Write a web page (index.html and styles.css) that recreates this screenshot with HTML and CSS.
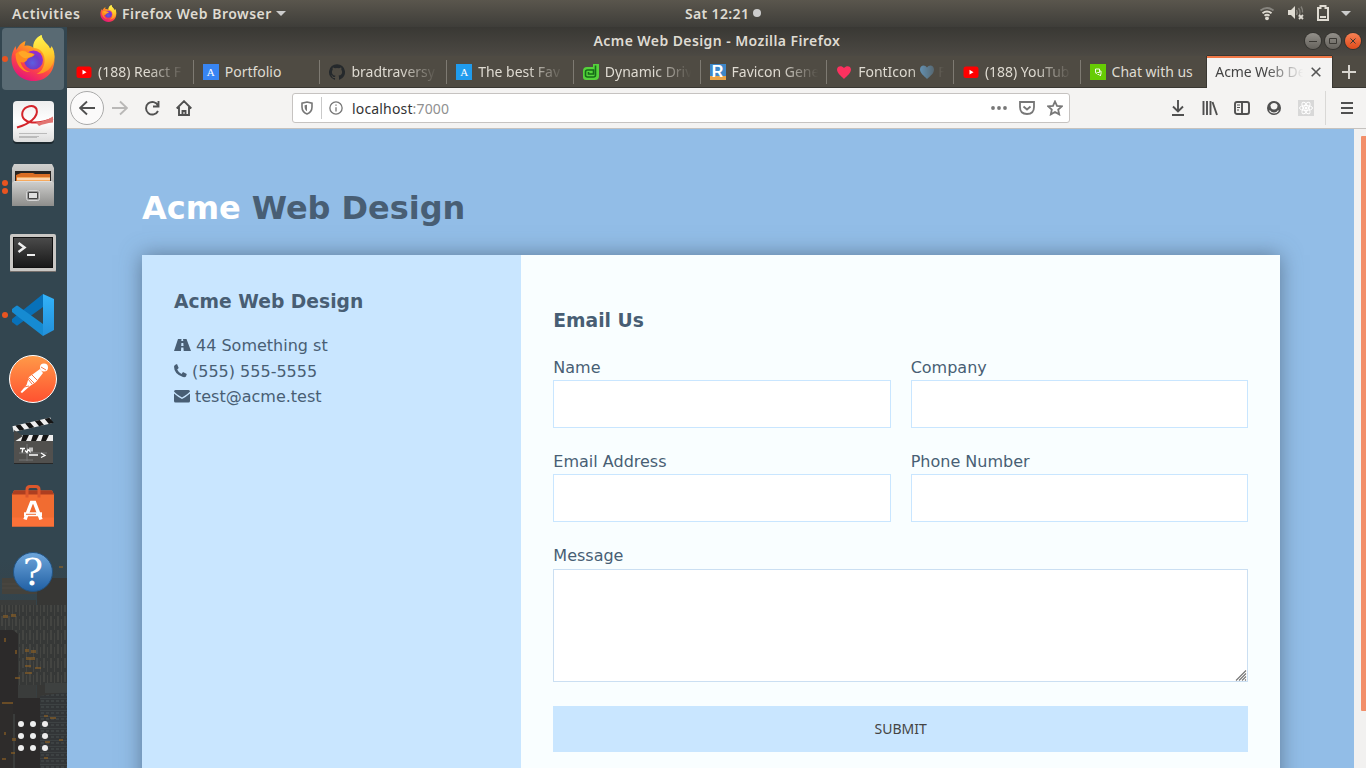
FILE: index.html
```html
<!DOCTYPE html>
<html lang="en">
<head>
<meta charset="utf-8">
<title>Acme Web Design</title>
<link rel="stylesheet" href="styles.css">
</head>
<body>
<svg class="defs" width="0" height="0">
  <defs>
    <linearGradient id="ffBody" x1=".8" y1="0" x2=".3" y2="1"><stop offset="0" stop-color="#fff04a"/><stop offset=".35" stop-color="#ff9a22"/><stop offset=".65" stop-color="#ff4a43"/><stop offset="1" stop-color="#e3127d"/></linearGradient>
    <linearGradient id="ffFlame" x1=".5" y1="0" x2=".6" y2="1"><stop offset="0" stop-color="#fff44f"/><stop offset=".5" stop-color="#ffcf2e"/><stop offset="1" stop-color="#ff8a1e"/></linearGradient>
    <radialGradient id="ffGlobe" cx=".45" cy=".65" r=".6"><stop offset="0" stop-color="#5b5fe0"/><stop offset=".6" stop-color="#6e3cc8"/><stop offset="1" stop-color="#9a2ad0"/></radialGradient>
    <symbol id="firefox" viewBox="0 0 46 46">
      <path d="M1 24C1 18 4 13 5 11l1 4c2-4 4-7 9-9l-1 5c4-1 7 0 9 2 0-6 3-11 8-13 1 7 6 9 8 14l2-2c7 13 2 34-18 34C10 46 1 36 1 24z" fill="url(#ffBody)"/>
      <path d="M31 0c-6 3-9 8-8 13 7 0 12 6 11 14-1 7-4 10-8 12 9 0 17-6 18-17 0-5-1-8-3-11l-1 4C39 9 32 7 31 0z" fill="url(#ffFlame)"/>
      <circle cx="23" cy="25" r="9.5" fill="url(#ffGlobe)"/>
      <path d="M5 19c3-4 9-5 12-2l7 2c0 3-5 3-7 5-1 3-4 4-7 3 1 5 5 9 10 10C12 38 5 30 5 19z" fill="#ff8b1e"/>
      <path d="M8 18c3-3 7-2 9 0l6 1c-1 3-5 3-7 4-3 1-6-2-8-5z" fill="#ffa726"/>
    </symbol>
    <symbol id="youtube" viewBox="0 0 16 16"><rect x=".5" y="2.500" width="15" height="11.500" rx="2.500" fill="#f00"/><path d="M6.500 5.800l4 2.400-4 2.400z" fill="#fff"/></symbol>
    <linearGradient id="paper" x1="0" y1="0" x2="0" y2="1"><stop offset="0" stop-color="#eee"/><stop offset=".5" stop-color="#fff"/><stop offset="1" stop-color="#ddd"/></linearGradient>
    <linearGradient id="metal" x1="0" y1="0" x2="0" y2="1"><stop offset="0" stop-color="#d0d0ce"/><stop offset="1" stop-color="#8d8d8b"/></linearGradient>
    <linearGradient id="screen" x1="0" y1="0" x2="0" y2="1"><stop offset="0" stop-color="#4a4a4a"/><stop offset="1" stop-color="#191919"/></linearGradient>
    <linearGradient id="orange" x1="0" y1="0" x2="0" y2="1"><stop offset="0" stop-color="#ff9a48"/><stop offset="1" stop-color="#ff5130"/></linearGradient>
    <linearGradient id="blue" x1="0" y1="0" x2="0" y2="1"><stop offset="0" stop-color="#6ea6db"/><stop offset="1" stop-color="#205fa3"/></linearGradient>
    <linearGradient id="codeLight" x1="0" y1="0" x2="0" y2="1"><stop offset="0" stop-color="#33b3fa"/><stop offset="1" stop-color="#2290da"/></linearGradient>
    <linearGradient id="dusk" x1="0" y1="0" x2="0" y2="1"><stop offset="0" stop-color="#334650"/><stop offset="1" stop-color="#3a3a37"/></linearGradient>
    <pattern id="slats" width="7" height="14" patternUnits="userSpaceOnUse"><rect width="7" height="14" fill="#363837"/><path d="M1 0h2v10H1zM5 3h1v11H5z" fill="#444542"/></pattern>
    <pattern id="floors" width="5" height="6" patternUnits="userSpaceOnUse"><rect width="5" height="6" fill="#323537"/><path d="M0 0h5v1H0zM1 2h3v2H1z" fill="#3d4243"/></pattern>
  </defs>
</svg>
<div class="desktop">
  <header class="topbar">
    <div class="top-left"><span class="activities">Activities</span>
      <svg width="17" height="17"><use href="#firefox"/></svg><span class="app-name">Firefox Web Browser</span>
      <svg width="10" height="5"><path d="M0 0h10L5 5z" fill="#ccc"/></svg></div>
    <div class="clock"><span>Sat 12:21</span><i class="dot"></i></div>
    <div class="top-right">
      <svg width="16" height="16" fill="none" stroke-width="2"><path d="M1.500 5.500q6.500-5 13 0" stroke="#86847e"/><path d="M3.500 8.200q4.500-3.400 9 0M5.500 10.700q2.500-2 5 0" stroke="#dfdbd2"/><circle cx="8" cy="13.300" r="1.900" fill="#dfdbd2"/></svg>
      <svg width="18" height="16"><path d="M1 5h3l4-4v13l-4-4H1z" fill="#dfdbd2"/><path d="M9.500 5q1.500 2.500 0 5M11.500 3q3 4.500 0 9M14 1.500q2 3 1.500 6" stroke="#817e77" stroke-width="1.400" fill="none"/><path d="M12 10l4 4m0-4l-4 4" stroke="#dfdbd2" stroke-width="1.800"/></svg>
      <svg width="14" height="18"><path d="M2 4h2.500V2h5v2H12v12H2z" fill="none" stroke="#dfdbd2" stroke-width="2"/><path d="M4 12h6v2H4z" fill="#dfdbd2"/></svg>
      <svg width="10" height="5"><path d="M0 0h10L5 5z" fill="#ccc"/></svg>
    </div>
  </header>
  <nav class="dock">
    <svg class="skyline" width="67" height="208" viewBox="0 0 67 208">
      <path d="M0 0h67v208H0z" fill="url(#dusk)"/><path d="M0 40h36v168H0z" fill="#3a3c3b"/><path d="M37 18h30v190H37z" fill="#373735"/>
      <path d="M2 18h35v16H2z" fill="#44423c"/><path d="M2 24h35M2 28h35" stroke="#4c4942"/>
      <path d="M0 45h67v80H0z" fill="url(#slats)"/><path d="M0 70h13l5 4v80H0zM15 138h25v70H15z" fill="#2c2a2a"/>
      <path d="M0 142h13v66H0z" fill="#2e2c2b"/><path d="M40 136l27-4v76H40z" fill="url(#floors)"/>
      <path d="M45 123h22v10H45z" fill="#3e4140"/>
      <path d="M3 55h5v3H3zM11 54h5v3h-5zM15 90h2v4h-2zM4 78h2v4H4zM25 89h4v3h-4zM31 90h5v3h-5zM26 97h9v3h-9zM25 105h6v2h-6zM35 107h6v2h-6zM25 112h7v2h-7zM15 117h5v2h-5zM2 142h11v2H2zM44 155h4v2h-4zM50 157h6v2h-6zM12 178h4v3h-4zM4 172h2v3H4zM11 192h4v2h-4zM45 181h5v2h-5zM59 179h4v2h-4zM2 198h4v2H2zM44 197h4v2h-4zM59 6h4v2h-4z" fill="#916323" opacity=".6"/>
    </svg>
    <div class="dock-item active"><i class="run"></i><svg class="app" viewBox="0 0 67 64"><use href="#firefox" x="10.500" y="8" width="46" height="46"/></svg></div>
    <div class="dock-item"><svg class="app" viewBox="0 0 67 64"><rect x="13" y="11" width="41" height="42" rx="4" fill="#1d292f"/><rect x="13" y="10" width="41" height="41" rx="4" fill="url(#paper)"/><path d="M17 36.500C29 33 39 26 36.500 18c-2.500-5.500-12-3-14 3-1.500 6 3 10 9.500 10.500 7 .5 14-1 21-4" fill="none" stroke="#d4252c" stroke-width="2"/><path d="M36 31.500q9-1 17-6v6q-9 1-14 3.500z" fill="#e27572"/><path d="M19 42.500h28M19 45.500h20M19 46.500h18" stroke="#bbb"/></svg></div>
    <div class="dock-item"><i class="run two"></i><svg class="app" viewBox="0 -2 67 64"><path d="M12 11l2-4h38l2 4v36H12z" fill="url(#metal)"/><path d="M15 14h36v12H15z" fill="#272422"/><path d="M16 18l5-2h12l2 1h15v8H16z" fill="#d96d24"/><path d="M17 20h33v5H17z" fill="#f6a95c"/><path d="M17 21.500h33v1H17z" fill="#fff"/><path d="M14 24h38l2 2v23H12V26z" fill="url(#metal)"/><path d="M14 24.500h38" stroke="#ddd"/><rect x="26" y="33" width="14" height="11" rx="2" fill="#999"/><rect x="26.500" y="33.500" width="13" height="10" rx="2" fill="none" stroke="#d6d6d6"/><path d="M28.500 35.500h9v6h-9z" fill="#e0e0e0" stroke="#444"/></svg></div>
    <div class="dock-item"><svg class="app" viewBox="0 0 67 64"><rect x="10" y="15" width="46" height="38" rx="2" fill="#c9c7c4"/><path d="M10 52.500h46" stroke="#756f6c"/><path d="M13 18h40v31H13z" fill="#111"/><path d="M14 19h38v29H14z" fill="url(#screen)"/><path d="M18.500 24l6 4.500-6 4.500" fill="none" stroke="#eee" stroke-width="2.500"/><path d="M27 36h8" stroke="#eee" stroke-width="2"/></svg></div>
    <div class="dock-item"><i class="run"></i><svg class="app" viewBox="0 0 67 64"><path d="M43 11v13L18 42q-1 1-2 0l-4-3v-3z" fill="#0871b9"/><path d="M12 26l4-3q1-1 2 0l25 18v12L12 29z" fill="#168bd2"/><path d="M43 11l11 5v31l-11 6V28z" fill="url(#codeLight)"/></svg></div>
    <div class="dock-item"><svg class="app" viewBox="0 0 67 64"><circle cx="33" cy="32" r="23.500" fill="url(#orange)" stroke="#fff"/><circle cx="44" cy="20.500" r="4" fill="#fff"/><path d="M40 22l3 4-7 9-6 4-8 7-1.500-1 6-7 2.500-8z" fill="#fff"/><path d="M29 31l5 5m-2-8l5 5m-9-1l4 5M41 20l5 3M24 40l5-1" stroke="#f77a4b"/></svg></div>
    <div class="dock-item"><svg class="app" viewBox="0 -2 67 64"><path d="M14 27h39v24H14z" fill="#51504e"/><path d="M14 50.500h39" stroke="#282828"/><path d="M14 22h39v6H14z" fill="#eee"/><path d="M23 22h6l-3 6h-5zM33 22h6l-3 6h-5zM43 22h6l-3 6h-5z" fill="#151515"/><g transform="rotate(-13 14 20)"><path d="M14 13h39v6H14z" fill="#eee"/><path d="M22 13h-5l3 6h5zM32 13h-5l3 6h5zM42 13h-5l3 6h5zM52 13h-5l3 6h5z" fill="#151515"/></g><path d="M14 17l9 6-9 6z" fill="#454645"/><path d="M19 40h28M19 47h14M27 31v17" stroke="#777"/><path d="M20 35.500h5m-2 0l-1 4m3-2l2 2 1-3 2 2v-4m2 0v4M29 42h9m3-2l4 2.500-4 2" stroke="#fff" stroke-width="1.300" fill="none"/></svg></div>
    <div class="dock-item"><svg class="app" viewBox="0 -1.500 67 64"><path d="M12 18l2-4h38l2 4v32H12z" fill="#f16c31"/><path d="M12 18l2-4h38l2 4z" fill="#ad3e20"/><path d="M12 41h42v9H12z" fill="#fb7138"/><path d="M27 21v-8q0-3 3-3h6q3 0 3 3v8" fill="none" stroke="#dc572c" stroke-width="3"/><path d="M25 43l6.500-17h3L41 43" fill="none" stroke="#fff" stroke-width="3.500"/><path d="M24 37.800h18" stroke="#fff" stroke-width="4"/><path d="M26 37.800h10" stroke="#ed6c34"/></svg></div>
    <div class="dock-item"><svg class="app" viewBox="0 -1 67 64"><circle cx="33" cy="32" r="19.500" fill="url(#blue)" stroke="#235482"/><text x="33" y="45" class="question">?</text></svg></div>
    <svg class="apps-grid" viewBox="0 0 32 32" fill="#eee"><circle cx="4" cy="4" r="3"/><circle cx="16" cy="4" r="3"/><circle cx="28" cy="4" r="3"/><circle cx="4" cy="16" r="3"/><circle cx="16" cy="16" r="3"/><circle cx="28" cy="16" r="3"/><circle cx="4" cy="28" r="3"/><circle cx="16" cy="28" r="3"/><circle cx="28" cy="28" r="3"/></svg>
  </nav>
  <main class="window">
    <div class="titlebar"><span class="window-title">Acme Web Design - Mozilla Firefox</span>
      <div class="controls"><i class="ctl"><svg viewBox="0 0 16 16"><path d="M4 8.500h8"/></svg></i><i class="ctl"><svg viewBox="0 0 16 16"><path d="M4.500 5.500h7v5h-7z"/></svg></i><i class="ctl close"><svg viewBox="0 0 16 16"><path d="M5.500 5.500l5 5m0-5l-5 5"/></svg></i></div></div>
    <div class="tabs">
      <div class="tab first"><svg class="fav"><use href="#youtube"/></svg><span class="label fade">(188) React F</span></div>
      <div class="tab"><span class="fav letter">A</span><span class="label">Portfolio</span></div>
      <div class="tab"><svg class="fav" viewBox="0 0 16 16"><path d="M8 .2a8 8 0 0 0-2.530 15.590c.4.070.550-.170.550-.380v-1.490c-2.230.480-2.700-.950-2.700-.950-.360-.920-.890-1.170-.890-1.170-.730-.500.060-.490.060-.490.800.060 1.230.830 1.230.830.710 1.220 1.870.870 2.330.660.070-.520.280-.870.510-1.070-1.780-.200-3.640-.890-3.640-3.950 0-.870.310-1.590.820-2.150-.080-.200-.360-1.020.080-2.120 0 0 .670-.210 2.200.820a7.600 7.600 0 0 1 4 0c1.530-1.040 2.200-.820 2.200-.820.440 1.100.160 1.920.080 2.120.510.560.820 1.270.820 2.150 0 3.070-1.870 3.750-3.650 3.950.290.250.540.730.540 1.480v2.200c0 .210.150.460.550.380A8 8 0 0 0 8 .2z" fill="#25292c"/></svg><span class="label fade">bradtraversy</span></div>
      <div class="tab"><span class="fav letter sky">A</span><span class="label fade">The best Fav</span></div>
      <div class="tab"><svg class="fav" viewBox="0 0 16 16"><path d="M10 0h6v12q0 4-4 4H3q-3 0-3-3V7q0-4 4-4h6z" fill="#55d33b"/><path d="M12.500 1.500V11q0 2-2 2h-6q-2 0-2-2V8q0-2 2-2h6v4h-5V8" fill="none" stroke="#156b19" stroke-width="1.600"/></svg><span class="label fade">Dynamic Driv</span></div>
      <div class="tab"><span class="fav letter rr">R</span><span class="label fade">Favicon Gene</span></div>
      <div class="tab"><svg class="fav" viewBox="0 0 16 16"><path d="M8 15C5 12 1 9 1 5.500 1 2 5.500 1 8 4c2.500-3 7-2 7 1.500S11 12 8 15z" fill="#fc315f"/></svg><span class="label fade">FontIcon <svg class="blue-heart" viewBox="0 0 16 16"><path d="M8 15C5 12 1 9 1 5.500 1 1 6 0 8 3.500 10 0 15 1 15 5.500S11 12 8 15z" fill="#6db4ea"/></svg> F</span></div>
      <div class="tab"><svg class="fav"><use href="#youtube"/></svg><span class="label fade">(188) YouTub</span></div>
      <div class="tab"><svg class="fav" viewBox="0 0 16 16"><path d="M0 0h16v16H0z" fill="#66cc04"/><path d="M5.500 5h4v3.500h-2L6 9.500v-1h-.5zM10 7h1v3.500h-.5V12L9 10.500H7.500" fill="none" stroke="#fff" stroke-width=".9"/></svg><span class="label">Chat with us</span></div>
      <div class="tab current"><span class="label fade">Acme Web De</span><svg class="x" viewBox="0 0 10 10"><path d="M.7.700l8.600 8.600m0-8.600L.7 9.300"/></svg></div>
      <div class="new-tab"><svg width="14" height="14"><path d="M7 0v14M0 7h14" stroke="#d8d5cf" stroke-width="2"/></svg></div>
    </div>
    <div class="toolbar">
      <button class="back"><svg class="ico" viewBox="0 0 16 16"><path d="M16 8H1m7-6.500L1 8l7 6.500"/></svg></button>
      <svg class="ico forward" viewBox="0 0 16 16"><path d="M0 8h15M8 1.500L15 8l-7 6.500"/></svg>
      <svg class="ico reload" viewBox="0 0 16 16"><path d="M14 5.500A6.300 6.300 0 1 0 14 11M14.500 1v5.500H9"/></svg>
      <svg class="ico home" viewBox="0 0 16 16"><path d="M.7 8.500L8 1.200l7.300 7.300M3 7v8h10V7M6.500 15v-4h3v4"/></svg>
      <div class="urlbar">
        <svg class="ico small shield" viewBox="0 0 16 16"><path d="M8 2l5 1.200V7c0 3.500-1.700 5.700-5 7-3.300-1.300-5-3.500-5-7V3.200z"/><path d="M8 4.800v6.500C6.500 10.300 5.600 8.700 5.600 7V5.300z" fill="#777" stroke="none"/></svg>
        <i class="url-sep"></i>
        <svg class="ico info" viewBox="0 0 16 16"><circle cx="8" cy="8" r="7"/><path d="M8 7v5M8 4v1.500"/></svg>
        <span class="url">localhost<em>:7000</em></span>
        <svg class="ico dots" viewBox="0 0 16 16"><g fill="#777" stroke="none"><circle cx="2" cy="8" r="1.900"/><circle cx="8" cy="8" r="1.900"/><circle cx="14" cy="8" r="1.900"/></g></svg>
        <svg class="ico pocket" viewBox="0 0 16 16"><path d="M1 2h14v5q0 7-7 7T1 7zM4.500 6.500L8 9.500l3.500-3"/></svg>
        <svg class="ico star" viewBox="0 0 16 16"><path d="M8 1.500l2 4.400 4.800.500-3.600 3.200 1 4.800L8 12l-4.200 2.400 1-4.800L1.200 6.400 6 5.900z"/></svg>
      </div>
      <div class="tools">
        <svg class="ico" viewBox="0 0 16 16"><path d="M8 0v11M3 6.500l5 5 5-5M2 15h12"/></svg>
        <svg class="ico" viewBox="0 0 16 16"><path d="M1.500 1v14M5 1v14M8.500 1v14M10.500 2L15 15"/></svg>
        <svg class="ico" viewBox="0 0 16 16"><rect x="1" y="2" width="14" height="12" rx="2"/><path d="M8 2v12"/><path d="M3 5h3M3 7.500h3M3 10h2" stroke-width="1"/></svg>
        <svg class="ico" viewBox="0 0 16 16"><circle cx="8" cy="8" r="7" fill="#505050" stroke="none"/><path d="M4.500 5.500Q5 3 8 3t3.500 2.500Q11.500 9.500 8 9.500T4.500 5.500z" fill="#f4f3f2" stroke="none"/><path d="M3.500 10.500q1.500 2.500 4.500 2.500t4.500-2.500" stroke="#f4f3f2" stroke-width="1.200"/></svg>
        <svg class="ico" viewBox="0 0 16 16"><path d="M0 0h16v16H0z" fill="#d8d8d8" stroke="none"/><g stroke="#fff" stroke-width="1"><ellipse cx="8" cy="8" rx="6.500" ry="2.500"/><ellipse cx="8" cy="8" rx="6.500" ry="2.500" transform="rotate(60 8 8)"/><ellipse cx="8" cy="8" rx="6.500" ry="2.500" transform="rotate(-60 8 8)"/></g><circle cx="8" cy="8" r="1.500" fill="#fff" stroke="none"/></svg>
        <i class="tool-sep"></i>
        <svg class="ico menu" viewBox="0 0 16 16"><path d="M2 3h12M2 8h12M2 13h12"/></svg>
      </div>
    </div>
    <div class="viewport">
      <div class="page">
        <h1><span>Acme</span> Web Design</h1>
        <div class="wrapper">
          <section class="company"><h3>Acme Web Design</h3>
            <ul>
              <li><svg width="17" height="16" viewBox="0 0 17 16"><path fill-rule="evenodd" d="M4 2h3.500l-.2 2h2L9 2h3.500L17 14H9.700l-.3-3.500H7.200L7 14H0zM7.400 6l-.2 3h2.300l-.2-3z" fill="#485e74"/></svg><span>44 Something st</span></li>
              <li><svg width="13" height="16" viewBox="0 0 13 16"><path d="M3 1l1.700 4L3.200 6.500q1.300 3 4.300 4.500L9 9l3.800 2-.8 2.500q-1 1-3 .5Q0 11 0 3.500q.3-2 3-2.500z" fill="#485e74"/></svg><span>(555) 555-5555</span></li>
              <li><svg width="16" height="16" viewBox="0 0 16 16"><path d="M1.500 2h13Q16 2 16 3.500 14 6 8 9.500 2 6 0 3.500 0 2 1.500 2zM0 5.500Q4 9 8 11q4-2 8-5.500v7.500q0 1.500-1.500 1.500h-13Q0 14.500 0 13z" fill="#485e74"/></svg><span>test@acme.test</span></li>
            </ul></section>
          <section class="contact"><h3>Email Us</h3>
            <form>
              <p><label>Name</label><input></p>
              <p><label>Company</label><input></p>
              <p><label>Email Address</label><input></p>
              <p><label>Phone Number</label><input></p>
              <p class="full message"><label>Message</label><textarea></textarea><svg class="grip" width="12" height="12"><path d="M1 11.500L11 1.500M4 11.500l7-7M7 11.500l4-4M10 11.500l1-1" stroke="#777" stroke-width="1.100"/></svg></p>
              <button class="full submit" type="button">SUBMIT</button>
            </form></section>
        </div>
      </div>
      <div class="scrollbar"><i></i></div>
    </div>
  </main>
</div>
</body>
</html>
```
FILE: styles.css
```css
* { box-sizing: border-box; }
body { margin: 0; width: 1366px; height: 768px; overflow: hidden; font-family: "Noto Sans", "Open Sans", sans-serif; }
svg { display: block; flex: none; }
i, em { font-style: normal; }
.defs { position: absolute; }
.desktop { display: grid; grid-template: 27px 741px / 67px 1299px; }

.topbar { grid-column: 1 / 3; display: grid; grid-template-columns: minmax(0, 1fr) auto minmax(0, 1fr); align-items: center; padding-bottom: 1px; background: linear-gradient(#5a564d, #3e3d39); color: #dfdbd2; font-size: 14px; font-weight: 600; white-space: nowrap; }
.top-left { display: flex; align-items: center; padding-left: 12px; }
.activities { width: 88px; letter-spacing: .6px; }
.app-name { margin: 0 4px 0 5px; width: 150px; letter-spacing: .5px; }
.clock { display: flex; align-items: center; gap: 4px; width: 77px; letter-spacing: .35px; margin-left: 81px; }
.dot { width: 8px; height: 8px; border-radius: 50%; background: #ccc; }
.top-right { display: flex; align-items: center; justify-content: flex-end; gap: 11px; padding-right: 15px; }
.top-right svg:first-child { margin-right: 1px; }

.dock { position: relative; display: flex; flex-direction: column; background: #334650; }
.skyline { position: absolute; left: 0; bottom: 0; }
.dock-item { position: relative; height: 64px; }
.dock-item.active::before { content: ""; position: absolute; left: 2px; top: 1px; width: 62px; height: 62px; border-radius: 4px; background: #596a73; }
.app { position: relative; width: 67px; height: 64px; }
.run { position: absolute; z-index: 1; left: 2px; top: 29px; width: 6px; height: 6px; border-radius: 50%; background: #e95420; }
.run.two { top: 25px; box-shadow: 0 8px #e95420; }
.question { font: 38px "DejaVu Serif", serif; fill: #fff; text-anchor: middle; }
.apps-grid { position: relative; width: 32px; height: 32px; margin: auto 0 16px 17px; }

.window { display: grid; grid-template-rows: 29px 32px 41px 639px; }
.titlebar { display: grid; grid-template-columns: 1fr auto 1fr; align-items: center; background: linear-gradient(#393834, #4c4943); color: #dfdbd2; }
.window-title { grid-column: 2; padding: 0 0 2px 1px; font-size: 14px; font-weight: 600; width: 248px; white-space: nowrap; letter-spacing: .42px; }
.controls { display: flex; justify-content: flex-end; gap: 4px; padding: 0 5px 2px 0; }
.ctl { width: 16px; height: 16px; border-radius: 50%; background: linear-gradient(#93908a, #65625c); box-shadow: 0 0 0 1px #34332f; }
.ctl svg { fill: none; stroke: #3b3934; }
.ctl.close { background: linear-gradient(#f68154, #e14b1b); }

.tabs { display: flex; background: #4f4b43; border-bottom: 1px solid #393732; }
.tab { position: relative; display: flex; align-items: center; gap: 6px; width: 126.700px; padding-left: 9px; border-left: 1px solid #4f4b43; color: #dfdbd2; font-size: 14px; white-space: nowrap; }
.tab.first { width: 125.800px; padding-left: 8px; }
.tab:not(.first)::before { content: ""; position: absolute; left: -1px; top: 4px; width: 1px; height: 24px; background: #7e7a72; }
.fav { width: 16px; height: 16px; flex: none; }
.letter { background: #3885f3; color: #fff; font: 11px/16px "Liberation Serif", serif; text-align: center; }
.sky { background: #209cee; }
.rr { font: bold 16px/16px "Liberation Sans", sans-serif; background: linear-gradient(#3d87c9 75%, #e9a347 75%); }
.label { width: 90px; overflow: hidden; letter-spacing: -.02px; }
.fade { -webkit-mask-image: linear-gradient(90deg, #000 55%, transparent 96%); mask-image: linear-gradient(90deg, #000 55%, transparent 96%); }
.blue-heart { display: inline-block; width: 16px; height: 16px; margin: 0 0 -3px -1px; }
.tab.current { height: 32px; width: 127px; background: #f4f3f2; color: #444; border: 1px solid #393732; border-bottom: 0; border-top: 0; padding-left: 8px; gap: 4px; }
.tab.current .label { width: 92px; padding-bottom: 1px; letter-spacing: -.1px; }
.tab.current::before { left: 0; top: -1px; width: 125px; height: 3px; background: linear-gradient(#393732 1px, #f07746 1px); }
.x { width: 10px; height: 10px; stroke: #555; stroke-width: 1.600; }
.new-tab { display: flex; align-items: center; padding-left: 9px; }

.toolbar { display: flex; align-items: center; background: #f4f3f2; border-bottom: 1px solid #c5c2bf; }
.ico { width: 16px; height: 16px; fill: none; stroke: #505050; stroke-width: 1.900; }
.back { display: grid; place-items: center; width: 34px; height: 34px; margin-left: 3px; padding: 0; border: 1px solid #aaa; border-radius: 50%; background: #fbfafa; }
.forward { margin-left: 8px; stroke: #b9b8b7; }
.reload, .home { margin-left: 16px; }
.urlbar { display: flex; align-items: center; width: 778px; height: 30px; margin-left: 100px; padding-left: 6px; border: 1px solid #c6c3c1; border-radius: 3px; background: #fff; }
.urlbar .ico { stroke: #777; }
.urlbar .shield { stroke-width: 1.600; }
.url-sep { width: 1px; height: 22px; margin: 0 7px 0 6px; background: #c9c9c9; }
.ico.info { width: 14px; height: 14px; stroke-width: 1.500; }
.url { width: 639px; margin-left: 9px; font-size: 14px; letter-spacing: .16px; color: #333; }
.url em { color: #909090; }
.ico.pocket, .ico.star { margin-left: 12px; stroke-width: 1.800; }
.tools { display: flex; align-items: center; gap: 16px; margin-left: 100px; }
.tool-sep { width: 1px; height: 34px; margin: 0 -3px 0 -5px; background: #d9d8d6; }

.viewport { display: grid; grid-template-columns: 1287px 12px; overflow: hidden; }
.page { padding: 54px 74px 0 75px; background: #92bde7; color: #485e74; font-family: "DejaVu Sans", sans-serif; font-size: 16px; line-height: 1.6; }
h1 { margin: 0 0 20.800px; font-size: 32px; line-height: 51.200px; letter-spacing: -.03px; }
h1 span { color: #fff; }
.wrapper { display: grid; grid-template-columns: 1fr 2fr; height: 560px; box-shadow: 0 0 20px 0 rgba(72, 94, 116, .7); }
.company { padding: 32px; background: #c9e6ff; }
.company h3 { margin: 0 0 16px; font-size: 18.720px; }
ul { list-style: none; margin: 0; padding: 0; }
li { display: flex; align-items: center; gap: 5px; }
li svg { margin-top: -1px; }
.contact { padding: 32.400px 32px; background: #f9feff; }
.contact h3 { margin: 18.720px 0; font-size: 18.720px; }
form { display: grid; grid-template-columns: 1fr 1fr; gap: 20px; }
p { margin: 0; }
label { display: block; }
input, textarea { display: block; width: 100%; padding: 16px; border: 1px solid #c9e6ff; border-radius: 0; background: #fff; }
input { height: 48px; margin-bottom: .400px; }
textarea { height: 113px; margin-top: .600px; resize: none; border-color: #cbdff2; }
.full { grid-column: 1 / 3; }
.message { position: relative; }
.grip { position: absolute; right: 1px; bottom: 1px; }
.submit { height: 46px; margin-top: 4px; border: 0; background: #c9e6ff; color: #444; font: 14px "Noto Sans", sans-serif; }
.scrollbar { padding: 7px 0 0 7px; background: #f2f1f0; }
.scrollbar i { display: block; height: 575px; border-radius: 1px 0 0 1px; background: #f28e69; }
```
